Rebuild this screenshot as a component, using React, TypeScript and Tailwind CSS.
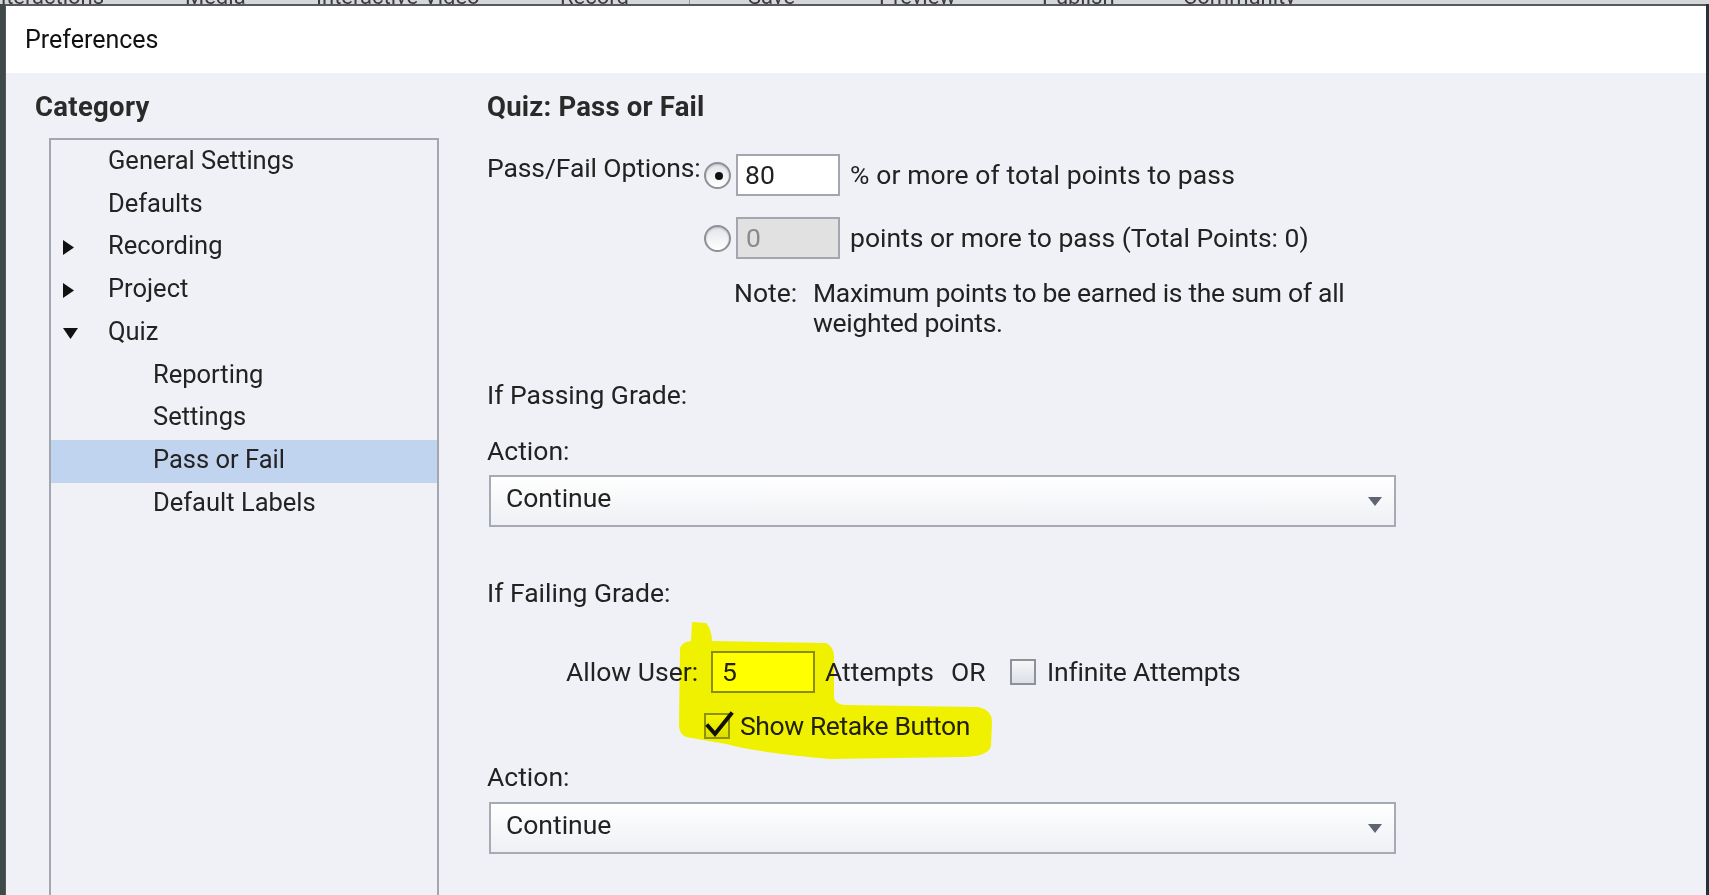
import React from "react";

function RightArrow() {
  return (
    <svg width="13" height="17" viewBox="0 0 13 17">
      <path d="M1 1 L12 8.5 L1 16 Z" fill="#111" />
    </svg>
  );
}

function DownArrow() {
  return (
    <svg width="17" height="13" viewBox="0 0 17 13">
      <path d="M1 1 L16 1 L8.5 12 Z" fill="#111" />
    </svg>
  );
}

function Radio({ checked }: { checked?: boolean }) {
  return (
    <div className="w-[27px] h-[27px] rounded-full border-2 border-[#8d9096] bg-gradient-to-b from-[#e3e5ea] to-white flex items-center justify-center shadow-[inset_0_1px_2px_rgba(0,0,0,0.18)]">
      {checked && <div className="w-[8px] h-[8px] rounded-full bg-[#111] ml-[3px] mt-[2px]" />}
    </div>
  );
}

function Checkbox({ checked }: { checked?: boolean }) {
  return (
    <div className="relative w-[26px] h-[26px] border-2 border-[#8e9199] bg-gradient-to-b from-[#f6f7f9] to-[#dcdfe4]">
      {checked && (
        <svg className="absolute left-[-2px] top-[-4px]" width="32" height="30" viewBox="0 0 32 30">
          <path d="M4 15 L11 23 L27 3" fill="none" stroke="#111" strokeWidth="4" strokeLinecap="square" />
        </svg>
      )}
    </div>
  );
}

function Select({ value }: { value: string }) {
  return (
    <div className="ml-[2px] w-[907px] h-[52px] border-2 border-[#a6aab3] bg-gradient-to-b from-white to-[#eef0f4] flex items-center pl-[15px] pr-[12px]">
      <span className="flex-1 text-[#222] pb-[6px]">{value}</span>
      <svg width="14" height="9" viewBox="0 0 14 9">
        <path d="M0 0 L14 0 L7 9 Z" fill="#5e6472" />
      </svg>
    </div>
  );
}

type TreeItem = { label: string; level: 1 | 2; arrow?: "right" | "down"; selected?: boolean };

const tree: TreeItem[] = [
  { label: "General Settings", level: 1 },
  { label: "Defaults", level: 1 },
  { label: "Recording", level: 1, arrow: "right" },
  { label: "Project", level: 1, arrow: "right" },
  { label: "Quiz", level: 1, arrow: "down" },
  { label: "Reporting", level: 2 },
  { label: "Settings", level: 2 },
  { label: "Pass or Fail", level: 2, selected: true },
  { label: "Default Labels", level: 2 },
];

function TopStrip() {
  return (
    <div className="h-[4px] bg-[#d6d7d9] overflow-hidden flex items-end text-[22px] leading-[14px] text-[#3c3c3c] whitespace-nowrap">
      <span className="ml-[-12px] w-[197px] shrink-0">Interactions</span>
      <span className="w-[131px] shrink-0">Media</span>
      <span className="w-[244px] shrink-0">Interactive Video</span>
      <span className="w-[129px] shrink-0">Record</span>
      <span className="w-[1px] h-[4px] bg-[#9a9a9a] shrink-0" />
      <span className="ml-[58px] w-[131px] shrink-0">Save</span>
      <span className="w-[163px] shrink-0">Preview</span>
      <span className="w-[141px] shrink-0">Publish</span>
      <span className="shrink-0">Community</span>
    </div>
  );
}

function LeftPane() {
  return (
    <div className="w-[481px] shrink-0 pl-[29px] pt-[20px] flex flex-col">
      <div className="h-[28px] leading-[28px] text-[27.5px] tracking-[0.3px] font-bold text-[#2a2a2a]">Category</div>
      <div className="mt-[17px] ml-[14px] w-[390px] flex-1 border-2 border-b-0 border-[#a3a7af] pt-[1px]">
        {tree.map((t) => (
          <div
            key={t.label}
            className={`h-[42.75px] flex items-center pb-[5px] text-[25.5px] text-[#232323] ${t.selected ? "bg-[#c0d3ef]" : ""}`}
          >
            {t.level === 1 ? (
              <>
                <div className="w-[11px] shrink-0" />
                <div className="w-[46px] shrink-0 flex items-center pt-[5px]">
                  {t.arrow === "right" && <RightArrow />}
                  {t.arrow === "down" && <DownArrow />}
                </div>
              </>
            ) : (
              <div className="w-[102px] shrink-0" />
            )}
            <span>{t.label}</span>
          </div>
        ))}
      </div>
    </div>
  );
}

function RightPane() {
  return (
    <div className="flex-1 flex flex-col pt-[20px] text-[26.5px] text-[#222]">
      <div className="h-[28px] leading-[28px] text-[27.5px] tracking-[0.2px] font-bold text-[#2a2a2a]">Quiz: Pass or Fail</div>

      <div className="mt-[33px] flex items-start">
        <div className="w-[217px] shrink-0 leading-[28px] whitespace-nowrap tracking-[-0.1px]">Pass/Fail Options:</div>
        <div className="h-[42px] flex items-center">
          <Radio checked />
          <div className="ml-[5px] w-[104px] h-[42px] border-2 border-[#a3a6ad] bg-white flex items-center pl-[7px]">80</div>
          <span className="ml-[10px] tracking-[0.1px]">% or more of total points to pass</span>
        </div>
      </div>

      <div className="mt-[21px] h-[42px] flex items-center pl-[217px]">
        <Radio />
        <div className="ml-[5px] w-[104px] h-[42px] border-2 border-[#a3a6ad] bg-[#e1e1e1] flex items-center pl-[8px] text-[#8a8a8a]">0</div>
        <span className="ml-[10px]">points or more to pass (Total Points: 0)</span>
      </div>

      <div className="mt-[19px] pl-[247px] flex leading-[30px]">
        <div className="w-[79px] shrink-0">Note:</div>
        <div className="tracking-[-0.3px]">
          Maximum points to be earned is the sum of all
          <br />
          weighted points.
        </div>
      </div>

      <div className="mt-[43px] h-[28px] leading-[28px]">If Passing Grade:</div>
      <div className="mt-[28px] h-[28px] leading-[28px]">Action:</div>
      <div className="mt-[10px]">
        <Select value="Continue" />
      </div>

      <div className="mt-[52px] h-[28px] leading-[28px]">If Failing Grade:</div>

      <div className="mt-[44px] h-[42px] flex items-center pl-[79px]">
        <span className="w-[133px] shrink-0 whitespace-nowrap">Allow User:</span>
        <div className="ml-[12px] w-[104px] h-[42px] border-2 border-[#8a8d94] bg-white flex items-center pl-[9px] shrink-0">5</div>
        <span className="ml-[10px] w-[126px] shrink-0">Attempts</span>
        <span className="w-[59px] shrink-0">OR</span>
        <Checkbox />
        <span className="ml-[11px] tracking-[-0.2px]">Infinite Attempts</span>
      </div>

      <div className="mt-[19px] h-[28px] flex items-center pl-[217px]">
        <Checkbox checked />
        <span className="ml-[10px] tracking-[-0.4px]">Show Retake Button</span>
      </div>

      <div className="mt-[23px] h-[28px] leading-[28px]">Action:</div>
      <div className="mt-[11px]">
        <Select value="Continue" />
      </div>
    </div>
  );
}

function Highlight() {
  return (
    <svg
      className="absolute left-0 top-0 pointer-events-none mix-blend-multiply"
      width="1709"
      height="895"
      viewBox="0 0 1709 895"
    >
      <path
        d="M692 622 L706 623 Q712 630 712 641 L826 643 Q834 647 834 656 L834 698 Q836 705 846 705 L978 707 Q992 710 992 722 L991 746 Q988 757 962 757 L830 759 Q760 753 726 744 L686 737 Q679 734 679 725 L680 648 Q682 642 691 641 Z"
        fill="#ffff00"
      />
    </svg>
  );
}

export default function App() {
  return (
    <div className="relative w-[1709px] h-[895px] overflow-hidden bg-[#2f3537] flex flex-col font-[Roboto,sans-serif] text-[#1e1e1e]">
      <TopStrip />
      <div className="flex-1 flex min-h-0">
        <div className="w-[5px] shrink-0 bg-[#3f4a48]" />
        <div className="flex-1 flex flex-col border-t-2 border-l border-[#55585c] min-w-0">
          <div className="h-[67px] shrink-0 bg-white flex items-center pl-[19px] text-[25px] text-[#111]">Preferences</div>
          <div className="flex-1 flex bg-[#eff1f6] min-h-0">
            <LeftPane />
            <RightPane />
          </div>
        </div>
        <div className="w-[3px] shrink-0 bg-[#263238]" />
      </div>
      <Highlight />
    </div>
  );
}
